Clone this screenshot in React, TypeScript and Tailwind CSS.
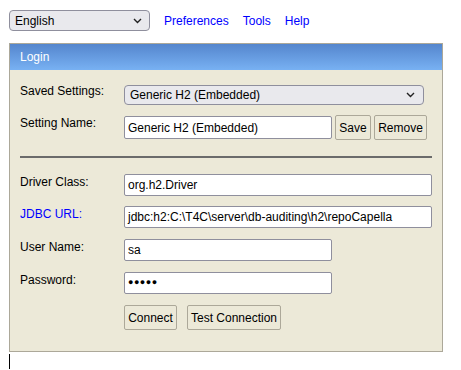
import React from 'react';

function Chevron() {
    return (
        <svg width="9" height="6" viewBox="0 0 9 6" className="shrink-0">
            <path d="M1 1 L4.5 4.5 L8 1" fill="none" stroke="#222" strokeWidth="1.4" />
        </svg>
    );
}

function Row({ label, blue, children, className }: { label: string; blue?: boolean; children: React.ReactNode; className?: string }) {
    return (
        <div className={`flex ${className ?? ''}`}>
            <div className={`w-[104px] shrink-0 pt-[1px] leading-[14px] ${blue ? 'text-[#0000ff]' : 'text-black'}`}>{label}</div>
            {children}
        </div>
    );
}

function Field({ value, width }: { value: string; width: string }) {
    return (
        <div className={`${width} h-[22px] bg-white border border-[#8f8f9d] rounded-[2px] flex items-center pl-[3px] text-black whitespace-nowrap overflow-hidden`}>
            {value}
        </div>
    );
}

function Btn({ children, width }: { children: React.ReactNode; width: string }) {
    return (
        <button className={`${width} h-[25px] bg-[#ece9d8] border border-[#aca899] rounded-[2px] flex items-center justify-center text-black`}>
            {children}
        </button>
    );
}

export default function App() {
    return (
        <div className="w-[461px] h-[370px] bg-white font-['Liberation_Sans',Arial,sans-serif] text-[12px] overflow-hidden">
            {/* top bar */}
            <div className="flex items-center pt-[10px] pl-[9px]">
                <div className="w-[141px] h-[21px] bg-[#e9e9ed] border border-[#8f8f9d] rounded-[4px] flex items-center justify-between pl-[5px] pr-[7px] text-black">
                    <span>English</span>
                    <Chevron />
                </div>
                <div className="flex gap-[14px] ml-[14px] text-[#0000ff]">
                    <a>Preferences</a>
                    <a>Tools</a>
                    <a>Help</a>
                </div>
            </div>

            {/* login panel */}
            <div className="ml-[9px] mt-[12px] w-[434px] border border-[#aca899] bg-[#ece9d8]">
                <div className="h-[26px] bg-gradient-to-b from-[#5586cd] to-[#78b1f3] text-white flex items-center pl-[10px]">Login</div>
                <div className="pl-[10px] pb-[21px] flex flex-col">
                    <div className="flex mt-[15px]">
                        <div className="w-[104px] shrink-0 leading-[14px] -mt-[1px]">Saved Settings:</div>
                        <div className="w-[300px] h-[20px] bg-[#e9e9ed] border border-[#8f8f9d] rounded-[4px] flex items-center justify-between pl-[5px] pr-[8px] text-black">
                            <span>Generic H2 (Embedded)</span>
                            <Chevron />
                        </div>
                    </div>
                    <Row label="Setting Name:" className="mt-[10px]">
                        <div className="mt-[1px]">
                            <div className="w-[208px] h-[23px] bg-white border border-[#8f8f9d] rounded-[2px] flex items-center pl-[3px]">Generic H2 (Embedded)</div>
                        </div>
                        <div className="flex gap-[3px] ml-[3px]">
                            <Btn width="w-[36px]">Save</Btn>
                            <Btn width="w-[53px]">Remove</Btn>
                        </div>
                    </Row>
                    <div className="mt-[16px] w-[412px] h-[2px] bg-[#6b6b6b]" />
                    <Row label="Driver Class:" className="mt-[16px]">
                        <Field value="org.h2.Driver" width="w-[308px]" />
                    </Row>
                    <Row label="JDBC URL:" blue className="mt-[10px]">
                        <Field value="jdbc:h2:C:\T4C\server\db-auditing\h2\repoCapella" width="w-[308px]" />
                    </Row>
                    <Row label="User Name:" className="mt-[11px]">
                        <Field value="sa" width="w-[208px]" />
                    </Row>
                    <Row label="Password:" className="mt-[11px]">
                        <div className="w-[208px] h-[22px] bg-white border border-[#8f8f9d] rounded-[2px] flex items-center pl-[3px] text-[9px] tracking-[0.5px] text-black">●●●●●</div>
                    </Row>
                    <div className="flex mt-[11px] pl-[104px] gap-[10px]">
                        <Btn width="w-[53px]">Connect</Btn>
                        <Btn width="w-[94px]">Test Connection</Btn>
                    </div>
                </div>
            </div>
            <div className="ml-[9px] mt-[2px] w-[1px] h-[15px] bg-black" />
        </div>
    );
}
